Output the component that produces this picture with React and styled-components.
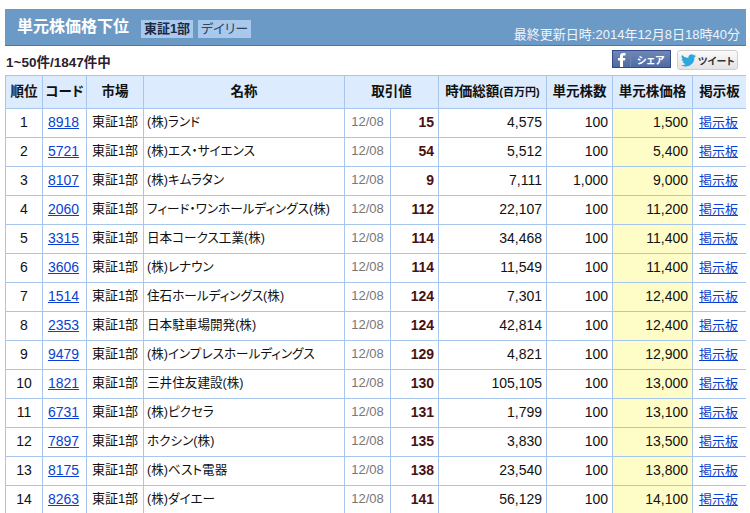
import React from 'react';
import styled, { createGlobalStyle } from 'styled-components';

const rows = [
  [1, '8918', '(株)ランド', 15, '4,575', '100', '1,500'],
  [2, '5721', '(株)エス・サイエンス', 54, '5,512', '100', '5,400'],
  [3, '8107', '(株)キムラタン', 9, '7,111', '1,000', '9,000'],
  [4, '2060', 'フィード・ワンホールディングス(株)', 112, '22,107', '100', '11,200'],
  [5, '3315', '日本コークス工業(株)', 114, '34,468', '100', '11,400'],
  [6, '3606', '(株)レナウン', 114, '11,549', '100', '11,400'],
  [7, '1514', '住石ホールディングス(株)', 124, '7,301', '100', '12,400'],
  [8, '2353', '日本駐車場開発(株)', 124, '42,814', '100', '12,400'],
  [9, '9479', '(株)インプレスホールディングス', 129, '4,821', '100', '12,900'],
  [10, '1821', '三井住友建設(株)', 130, '105,105', '100', '13,000'],
  [11, '6731', '(株)ピクセラ', 131, '1,799', '100', '13,100'],
  [12, '7897', 'ホクシン(株)', 135, '3,830', '100', '13,500'],
  [13, '8175', '(株)ベスト電器', 138, '23,540', '100', '13,800'],
  [14, '8263', '(株)ダイエー', 141, '56,129', '100', '14,100'],
];

const GlobalStyle = createGlobalStyle`
  html, body {
    margin: 0;
    padding: 0;
    background: #fff;
    overflow: hidden;
  }
  body {
    font-family: "Liberation Sans", "Noto Sans CJK JP", sans-serif;
    font-feature-settings: "palt";
    color: #000;
  }
`;

const Page = styled.div`
  width: 741px;
  height: 513px;
  margin-left: 5px;
  padding-top: 9px;
  box-sizing: border-box;
  overflow: hidden;
`;

const TitleBar = styled.div`
  height: 37px;
  box-sizing: border-box;
  background: #6c9ac6;
  border-bottom: 1px solid #4a78a8;
  display: flex;
  align-items: flex-start;
  padding: 7px 6px 0 12px;
  color: #fff;
`;

const Title = styled.h1`
  margin: 0;
  font-size: 16px;
  line-height: 22px;
  font-weight: bold;
  margin-right: 11px;
  width: 113px;
  flex: none;
`;

const Tag = styled.span`
  width: ${(p) => (p.$dark ? '52px' : '53px')};
  height: 18px;
  line-height: 18px;
  margin-top: 4px;
  margin-right: 5px;
  text-align: center;
  font-size: 13px;
  background: #a8c8ec;
  color: ${(p) => (p.$dark ? '#1a2a44' : '#2a4468')};
  font-weight: ${(p) => (p.$dark ? 'bold' : 'normal')};
`;

const Updated = styled.span`
  margin-left: auto;
  margin-top: 10px;
  font-size: 13px;
  line-height: 17px;
  color: #eef4fa;
`;

const InfoRow = styled.div`
  height: 29px;
  display: flex;
  align-items: center;
  justify-content: space-between;
  padding-right: 8px;
  padding-left: 1px;
`;

const Count = styled.span`
  font-size: 13.5px;
  font-weight: bold;
  color: #2a2030;
  margin-top: 1px;
`;

const Shares = styled.div`
  display: flex;
  gap: 6px;
  align-items: flex-start;
  margin-top: -1px;
`;

const FbButton = styled.div`
  width: 57px;
  height: 16px;
  background: linear-gradient(#6f88b8, #4f6ba3);
  border: 1px solid #2f4a85;
  display: flex;
  align-items: center;
  color: #fff;
  font-size: 10px;
  font-weight: bold;
`;

const FbMark = styled.div`
  width: 17px;
  height: 16px;
  display: flex;
  justify-content: center;
  align-items: flex-end;
  border-right: 1px solid #6d86b6;
  margin-right: 6px;
`;

const TwButton = styled.div`
  width: 61px;
  height: 20px;
  border: 1px solid #cfcfcf;
  border-radius: 3px;
  background: linear-gradient(#fafafa, #e4e4e4);
  display: flex;
  align-items: center;
  gap: 2px;
  box-sizing: border-box;
  padding-left: 3px;
  color: #333;
  font-size: 10px;
  font-weight: bold;
`;

const Table = styled.table`
  width: 741px;
  table-layout: fixed;
  border-collapse: collapse;
  font-size: 13px;
`;

const Th = styled.th`
  box-sizing: border-box;
  height: 33px;
  padding: 0 0 1px;
  border: 1px solid #a6c6ee;
  background: #dcebfd;
  color: #111;
  font-size: 13.5px;
  line-height: 18px;
  font-weight: bold;
  white-space: nowrap;
  overflow: hidden;
`;

const Small = styled.span`
  font-size: 11px;
`;

const Td = styled.td`
  box-sizing: border-box;
  height: 29px;
  padding: 0 ${(p) => (p.$align === 'right' ? '4px' : '0')} 2px ${(p) => (p.$align === 'left' ? '3px' : '0')};
  border: 1px solid #a6c6ee;
  text-align: ${(p) => p.$align || 'center'};
  font-size: ${(p) => p.$size || '14px'};
  line-height: 18px;
  color: ${(p) => p.$color || '#111'};
  font-weight: ${(p) => (p.$bold ? 'bold' : 'normal')};
  background: ${(p) => p.$bg || '#fff'};
  white-space: nowrap;
  overflow: hidden;
`;

const StockLink = styled.a`
  color: #0b3fd1;
  text-decoration: underline;
  font-size: 14px;
  margin-right: 2px;
`;

const BoardLink = styled(StockLink)`
  font-size: 13px;
`;

function App() {
  return (
    <Page>
      <GlobalStyle />
      <TitleBar>
        <Title>単元株価格下位</Title>
        <Tag $dark>東証1部</Tag>
        <Tag>デイリー</Tag>
        <Updated>最終更新日時:2014年12月8日18時40分</Updated>
      </TitleBar>
      <InfoRow>
        <Count>1~50件/1847件中</Count>
        <Shares>
          <FbButton>
            <FbMark>
              <svg width="10" height="15" viewBox="0 0 10 15">
                <path d="M3 15V8.500H1V6h2V4.200C3 2 4.200 1 6.200 1H8.500v2.500H7c-.8 0-1 .4-1 1V6h2.400L8 8.500H6V15z" fill="#fff" />
              </svg>
            </FbMark>
            シェア
          </FbButton>
          <TwButton>
            <svg width="15" height="13" viewBox="0 0 24 20">
              <path d="M24 2.400c-.9.4-1.800.7-2.800.8 1-.6 1.800-1.600 2.200-2.700-1 .6-2 1-3.100 1.200A4.900 4.900 0 0 0 11.900 6.100 14 14 0 0 1 1.700 1a4.900 4.900 0 0 0 1.500 6.600c-.8 0-1.600-.2-2.200-.6 0 2.400 1.700 4.400 3.900 4.900-.7.2-1.500.2-2.200.1.600 2 2.400 3.400 4.600 3.400A9.900 9.900 0 0 1 0 17.400 14 14 0 0 0 7.500 19.600c9.100 0 14.300-7.700 14-14.600 1-.7 1.800-1.600 2.500-2.600z" fill="#2ea7e0" />
            </svg>
            ツイート
          </TwButton>
        </Shares>
      </InfoRow>
      <Table>
        <colgroup>
          <col style={{ width: 37 }} />
          <col style={{ width: 44 }} />
          <col style={{ width: 57 }} />
          <col style={{ width: 201 }} />
          <col style={{ width: 46 }} />
          <col style={{ width: 48 }} />
          <col style={{ width: 108 }} />
          <col style={{ width: 66 }} />
          <col style={{ width: 80 }} />
          <col style={{ width: 54 }} />
        </colgroup>
        <thead>
          <tr>
            <Th>順位</Th>
            <Th>コード</Th>
            <Th>市場</Th>
            <Th>名称</Th>
            <Th colSpan={2}>取引値</Th>
            <Th>時価総額<Small>(百万円)</Small></Th>
            <Th>単元株数</Th>
            <Th>単元株価格</Th>
            <Th>掲示板</Th>
          </tr>
        </thead>
        <tbody>
          {rows.map((r) => (
            <tr key={r[0]}>
              <Td>{r[0]}</Td>
              <Td><StockLink href="#">{r[1]}</StockLink></Td>
              <Td $size="13px">東証1部</Td>
              <Td $align="left" $size="12.6px">{r[2]}</Td>
              <Td $size="13px" $color="#777">12/08</Td>
              <Td $align="right" $bold $color="#4a1010">{r[3]}</Td>
              <Td $align="right">{r[4]}</Td>
              <Td $align="right">{r[5]}</Td>
              <Td $align="right" $bg="#fefdc8">{r[6]}</Td>
              <Td><BoardLink href="#">掲示板</BoardLink></Td>
            </tr>
          ))}
        </tbody>
      </Table>
    </Page>
  );
}

export default App;
